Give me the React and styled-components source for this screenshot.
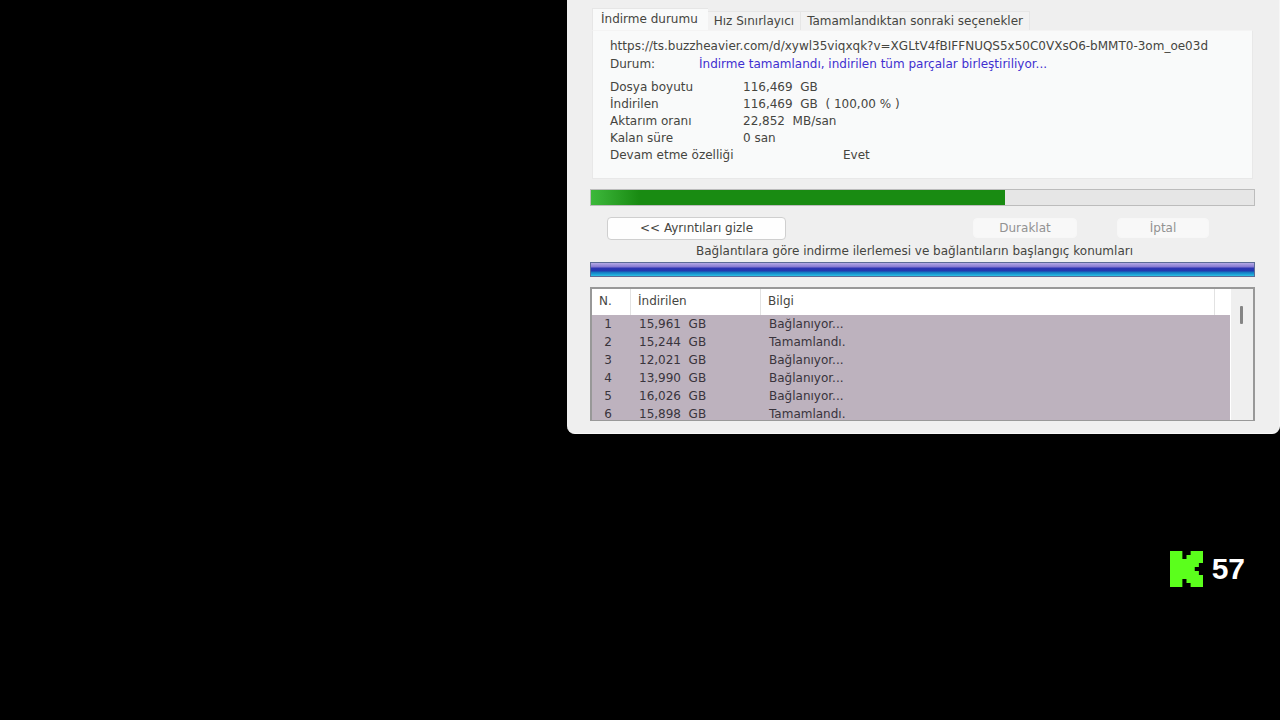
import React from 'react'
import styled, { createGlobalStyle } from 'styled-components'

const GlobalStyle = createGlobalStyle`
    * {
        box-sizing: border-box;
    }

    body {
        margin: 0;
        background: #000;
        color: #45453f;
        font: 12px/18px "DejaVu Sans", Verdana, sans-serif;
    }

    button {
        font: inherit;
        color: inherit;
        margin: 0;
    }
`

const Page = styled.main`
    min-height: 100vh;
    display: flex;
    flex-direction: column;
`

const Stage = styled.div`
    display: grid;
    grid-template-columns: 567fr 713fr;
`

const Dialog = styled.section`
    grid-column: 2;
    padding: 8px 24px 12px 23px;
    background: #efefef;
    border-right: 1px solid #f6f6f6;
    border-bottom: 1px solid #f9f9f9;
    border-radius: 0 0 8px 8px;
`

const Tabs = styled.div`
    display: flex;
    align-items: flex-end;
    height: 22px;
    padding-left: 2px;
`

const Tab = styled.button`
    height: ${props => props.$active ? 22 : 19}px;
    padding: ${props => props.$active ? '0 10px 2px 8px' : '0 6px'};
    border: 1px solid #e6e6e6;
    border-width: ${props => props.$active ? '1px 0 0 1px' : '1px 1px 0 0'};
    background: ${props => props.$active ? '#f9fafa' : '#f2f2f2'};
    line-height: 18px;
    white-space: nowrap;
`

const Panel = styled.div`
    margin: 0 2px;
    padding: 6px 14px 14px 17px;
    border: 1px solid #e8e8e8;
    border-top-color: #f4f4f4;
    background: #f9fafa;
`

const Url = styled.div`
    white-space: nowrap;
`

const Status = styled.div`
    display: grid;
    grid-template-columns: 89px 1fr;
    margin-bottom: 6px;
`

const StatusText = styled.span`
    color: #3f2fd0;
`

const Details = styled.dl`
    display: grid;
    grid-template-columns: 133px 1fr;
    margin: 0;
    line-height: 17px;
`

const Term = styled.dt`
    white-space: nowrap;
`

const Value = styled.dd`
    margin: 0;
    padding-left: ${props => props.$wide ? 100 : 0}px;
    white-space: pre;
`

const Progress = styled.div`
    height: 17px;
    margin-top: 10px;
    border: 1px solid #bcbcbc;
    background: #e6e6e6;
`

const ProgressFill = styled.div`
    height: 100%;
    background: linear-gradient(90deg, #3cb93a 0, #35ad32 12px, #198b12 48px);
`

const Actions = styled.div`
    display: flex;
    align-items: center;
    height: 24px;
    margin: 10px 46px 0 17px;
`

const Button = styled.button`
    width: ${props => props.$width}px;
    height: 23px;
    padding: 0;
    border: 1px solid #cfcfcf;
    border-radius: 4px;
    background: #fefefe;

    &:disabled {
        height: 20px;
        border-color: #f7f7f7;
        background: #f8f8f8;
        color: #929292;
    }
`

const RightButtons = styled.div`
    display: flex;
    gap: 40px;
    margin-left: auto;
`

const Caption = styled.div`
    margin: 2px 0;
    padding-right: 16px;
    text-align: center;
`

const Segments = styled.div`
    height: 15px;
    border: 1px solid #5b6b96;
    background: linear-gradient(#b5a9e6 0, #8377d0 4px, #2f35b2 5px, #2038ae 8px, #1673c0 9px, #189ad3 11px, #30c0e0 13px);
`

const ListFrame = styled.div`
    display: flex;
    height: 134px;
    margin-top: 10px;
    border: 2px solid #989898;
    border-bottom-width: 1px;
    background: #fff;
    overflow: hidden;
`

const List = styled.table`
    flex: 1;
    width: 100%;
    table-layout: fixed;
    border-collapse: separate;
    border-spacing: 0;
`

const HeadCell = styled.th`
    width: ${props => props.$width ? props.$width + 'px' : 'auto'};
    height: 26px;
    padding: 0 7px 2px;
    border-right: ${props => props.$last ? 0 : 1}px solid #e2e2e2;
    font-weight: normal;
    text-align: left;
`

const Row = styled.tr`
    background: #bdb2be;
    color: #39343c;
`

const Cell = styled.td`
    height: 18px;
    padding: ${props => props.$number ? '0 7px 0 0' : '0 8px'};
    text-align: ${props => props.$number ? 'center' : 'left'};
    white-space: pre;
`

const Scrollbar = styled.div`
    width: 22px;
    margin-left: 1px;
    padding: 17px 9px 0;
    background: #efefef;
`

const Thumb = styled.div`
    width: 3px;
    height: 18px;
    border-radius: 1px;
    background: #858585;
`

const Viewers = styled.aside`
    display: flex;
    align-items: center;
    gap: 9px;
    margin: auto 35px 133px auto;
    color: #fff;
    font: bold 30px/36px "Liberation Sans", Arial, sans-serif;
`

const details = [
    { label: 'Dosya boyutu', value: '116,469  GB' },
    { label: 'İndirilen', value: '116,469  GB  ( 100,00 % )' },
    { label: 'Aktarım oranı', value: '22,852  MB/san' },
    { label: 'Kalan süre', value: '0 san' },
    { label: 'Devam etme özelliği', value: 'Evet', wide: true }
]

const connections = [
    ['1', '15,961  GB', 'Bağlanıyor...'],
    ['2', '15,244  GB', 'Tamamlandı.'],
    ['3', '12,021  GB', 'Bağlanıyor...'],
    ['4', '13,990  GB', 'Bağlanıyor...'],
    ['5', '16,026  GB', 'Bağlanıyor...'],
    ['6', '15,898  GB', 'Tamamlandı.']
]

const DownloadDialog = ({ done = 62.4 }) => (
    <Dialog>
        <Tabs role="tablist">
            <Tab role="tab" aria-selected="true" $active>İndirme durumu</Tab>
            <Tab role="tab" aria-selected="false">Hız Sınırlayıcı</Tab>
            <Tab role="tab" aria-selected="false">Tamamlandıktan sonraki seçenekler</Tab>
        </Tabs>
        <Panel role="tabpanel">
            <Url>https://ts.buzzheavier.com/d/xywl35viqxqk?v=XGLtV4fBIFFNUQS5x50C0VXsO6-bMMT0-3om_oe03d</Url>
            <Status>
                <span>Durum:</span>
                <StatusText>İndirme tamamlandı, indirilen tüm parçalar birleştiriliyor...</StatusText>
            </Status>
            <Details>
                {details.map(item => (
                    <React.Fragment key={item.label}>
                        <Term>{item.label}</Term>
                        <Value $wide={item.wide}>{item.value}</Value>
                    </React.Fragment>
                ))}
            </Details>
        </Panel>
        <Progress role="progressbar" aria-valuenow={done}>
            <ProgressFill style={{ width: `${done}%` }} />
        </Progress>
        <Actions>
            <Button $width={179}>&lt;&lt; Ayrıntıları gizle</Button>
            <RightButtons>
                <Button $width={104} disabled>Duraklat</Button>
                <Button $width={92} disabled>İptal</Button>
            </RightButtons>
        </Actions>
        <Caption>Bağlantılara göre indirme ilerlemesi ve bağlantıların başlangıç konumları</Caption>
        <Segments />
        <ListFrame>
            <List>
                <thead>
                    <tr>
                        <HeadCell $width={39}>N.</HeadCell>
                        <HeadCell $width={130}>İndirilen</HeadCell>
                        <HeadCell>Bilgi</HeadCell>
                        <HeadCell $width={15} $last />
                    </tr>
                </thead>
                <tbody>
                    {connections.map(([n, size, info]) => (
                        <Row key={n}>
                            <Cell $number>{n}</Cell>
                            <Cell>{size}</Cell>
                            <Cell colSpan={2}>{info}</Cell>
                        </Row>
                    ))}
                </tbody>
            </List>
            <Scrollbar>
                <Thumb />
            </Scrollbar>
        </ListFrame>
    </Dialog>
)

const KickLogo = () => (
    <svg width="33" height="36" viewBox="0 0 8 9" preserveAspectRatio="none" aria-hidden="true">
        <path fill="#5bff1c" d="M0 0h3v2h1V1h1V0h3v3H7v1H6v1h1v1h1v3H5V8H4V7H3v2H0z" />
    </svg>
)

const App = () => (
    <Page>
        <GlobalStyle />
        <Stage>
            <DownloadDialog />
        </Stage>
        <Viewers>
            <KickLogo />
            <span>57</span>
        </Viewers>
    </Page>
)

export default App
